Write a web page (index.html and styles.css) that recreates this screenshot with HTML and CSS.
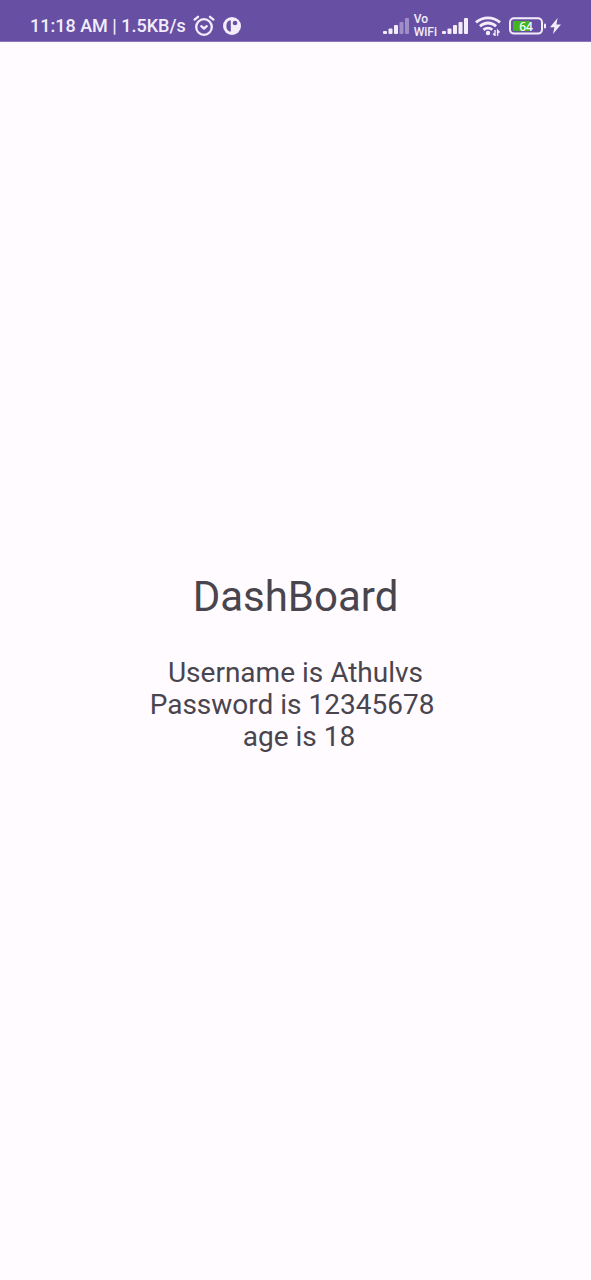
FILE: index.html
```html
<!DOCTYPE html>
<html lang="en">
<head>
<meta charset="utf-8">
<meta name="viewport" content="width=device-width, initial-scale=1">
<title>DashBoard</title>
<link rel="stylesheet" href="styles.css">
</head>
<body>
<header class="status-bar">
  <div class="status-left">
    <span class="clock">11:18 AM | 1.5KB/s</span>
    <svg class="icon alarm" width="22" height="22" viewBox="0 0 22 22" aria-hidden="true">
      <g fill="none" stroke="currentColor" stroke-width="2.3" stroke-linecap="round" stroke-linejoin="round">
        <circle cx="11" cy="12" r="7.8"/>
        <path d="M1.6 4.6 5 1.8M17 1.8l3.4 2.8M8.3 11.2l2.7 2.3 2.7-2.3"/>
      </g>
    </svg>
    <svg class="icon app" width="18" height="18" viewBox="0 0 18 18" aria-hidden="true">
      <circle cx="9" cy="9" r="9" fill="currentColor"/>
      <g class="cutout">
        <path d="M7.8 3.6v10.8H6.4Q3.4 13.2 3.4 9T6.4 3.6z"/>
        <circle cx="12" cy="6" r="2.3"/>
      </g>
    </svg>
  </div>
  <div class="status-right">
    <svg class="icon" width="26" height="18" viewBox="0 0 26 18" fill="currentColor" aria-hidden="true">
      <rect x="0" y="14" width="4" height="3" rx="1"/>
      <rect x="5.5" y="11.5" width="4" height="5.5" rx="1"/>
      <rect x="11" y="8" width="4" height="9" rx="1"/>
      <g opacity=".4"><rect x="16.5" y="5" width="4" height="12" rx="1"/><rect x="22" y="1" width="4" height="16" rx="1"/></g>
    </svg>
    <span class="vowifi"><span>Vo</span><span>WiFi</span></span>
    <svg class="icon" width="26" height="18" viewBox="0 0 26 18" fill="currentColor" aria-hidden="true">
      <rect x="0" y="14" width="4" height="3" rx="1"/>
      <rect x="5.5" y="11.5" width="4" height="5.5" rx="1"/>
      <rect x="11" y="8" width="4" height="9" rx="1"/>
      <rect x="16.5" y="5" width="4" height="12" rx="1"/><rect x="22" y="1" width="4" height="16" rx="1"/>
    </svg>
    <svg class="icon wifi" width="26" height="20" viewBox="0 0 26 20" aria-hidden="true">
      <g fill="none" stroke="currentColor" stroke-width="2.8">
        <path d="M1 6.4Q6.5 1.9 13 1.9T25 6.4"/>
        <path d="M4.9 10.2Q8.5 7 13 7t8.1 3.2"/>
        <path d="M8.5 13.9q2-1.8 4.5-1.8t4.3 1.6"/>
      </g>
      <circle cx="13" cy="17" r="2.2" fill="currentColor"/>
      <path d="M20 14v5.5L18 17.4M22.6 19.8v-5.5l2 2.1" fill="none" stroke="currentColor" stroke-width="1.4"/>
    </svg>
    <svg class="icon battery" width="37" height="18" viewBox="0 0 37 18" aria-hidden="true">
      <rect x="1" y="1.2" width="32" height="15.4" rx="4" fill="none" stroke="currentColor" stroke-width="2"/>
      <rect x="4" y="4" width="17" height="10" rx="1" fill="#45b51f"/>
      <rect x="35" y="6.5" width="2" height="5" rx="1" fill="currentColor"/>
      <text x="17" y="13.5" text-anchor="middle">64</text>
    </svg>
    <svg class="icon bolt" width="11" height="16" viewBox="0 0 11 16" aria-hidden="true">
      <path d="M7.6 0 0 9.2h4.4L3 16l8-9.6H6.4z" fill="currentColor"/>
    </svg>
  </div>
</header>
<main class="dashboard">
  <h1 class="title">DashBoard</h1>
  <p class="details">Username is Athulvs
Password is 12345678 
 age is 18</p>
</main>
</body>
</html>
```
FILE: styles.css
```css
body {
  margin: 0;
  min-height: 100vh;
  display: flex;
  flex-direction: column;
  background: #fffbff;
  color: #49454e;
  font-family: Roboto, "Liberation Sans", sans-serif;
}

.status-bar {
  display: flex;
  justify-content: space-between;
  align-items: center;
  box-sizing: border-box;
  min-height: 42px;
  padding: 11px 30px 0;
  background: #6750a4;
  border-bottom: 1px solid #8a76b8;
  color: #f3edfb;
}

.status-left,
.status-right {
  display: flex;
  align-items: center;
}

.clock {
  font-size: 18px;
  font-weight: 500;
  line-height: 24px;
  white-space: nowrap;
}

.icon {
  display: block;
  flex: none;
}

.alarm {
  margin-left: 7px;
}

.app {
  margin-left: 8px;
}

.cutout {
  fill: #6750a4;
}

.vowifi {
  display: flex;
  flex-direction: column;
  margin: 0 5px;
  font-family: Roboto, sans-serif;
  font-size: 12px;
  font-weight: 500;
  line-height: 13px;
}

.wifi {
  margin-left: 7px;
}

.battery {
  margin-left: 8px;
}

.battery text {
  fill: #ffffff;
  font-family: "Noto Sans", sans-serif;
  font-size: 12px;
  font-weight: 500;
}

.bolt {
  margin-left: 4px;
}

.dashboard {
  flex: 1;
  display: flex;
  flex-direction: column;
  align-items: center;
  justify-content: center;
  gap: 36px;
  padding-top: 4px;
}

.title {
  margin: 0;
  font-size: 42px;
  font-weight: 400;
  line-height: 48px;
}

.details {
  margin: 0;
  font-size: 28px;
  line-height: 32px;
  text-align: center;
  white-space: pre;
}
```
